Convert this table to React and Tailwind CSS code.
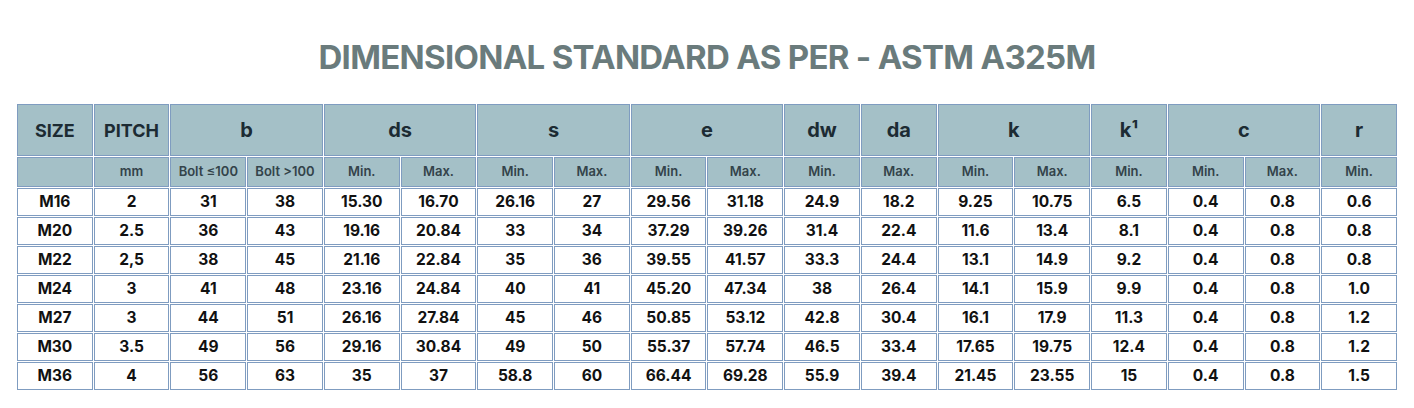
const ROWS = [
  ['M16', '2', '31', '38', '15.30', '16.70', '26.16', '27', '29.56', '31.18', '24.9', '18.2', '9.25', '10.75', '6.5', '0.4', '0.8', '0.6'],
  ['M20', '2.5', '36', '43', '19.16', '20.84', '33', '34', '37.29', '39.26', '31.4', '22.4', '11.6', '13.4', '8.1', '0.4', '0.8', '0.8'],
  ['M22', '2,5', '38', '45', '21.16', '22.84', '35', '36', '39.55', '41.57', '33.3', '24.4', '13.1', '14.9', '9.2', '0.4', '0.8', '0.8'],
  ['M24', '3', '41', '48', '23.16', '24.84', '40', '41', '45.20', '47.34', '38', '26.4', '14.1', '15.9', '9.9', '0.4', '0.8', '1.0'],
  ['M27', '3', '44', '51', '26.16', '27.84', '45', '46', '50.85', '53.12', '42.8', '30.4', '16.1', '17.9', '11.3', '0.4', '0.8', '1.2'],
  ['M30', '3.5', '49', '56', '29.16', '30.84', '49', '50', '55.37', '57.74', '46.5', '33.4', '17.65', '19.75', '12.4', '0.4', '0.8', '1.2'],
  ['M36', '4', '56', '63', '35', '37', '58.8', '60', '66.44', '69.28', '55.9', '39.4', '21.45', '23.55', '15', '0.4', '0.8', '1.5'],
]

// top header: label + colspan
const GROUPS = [
  ['SIZE', 1], ['PITCH', 1], ['b', 2], ['ds', 2], ['s', 2], ['e', 2],
  ['dw', 1], ['da', 1], ['k', 2], ['k\u00b9', 1], ['c', 2], ['r', 1],
]

const SUB = [
  '', 'mm', 'Bolt \u2264100', 'Bolt >100', 'Min.', 'Max.', 'Min.', 'Max.', 'Min.', 'Max.',
  'Min.', 'Max.', 'Min.', 'Max.', 'Min.', 'Min.', 'Max.', 'Min.',
]

const cell = 'border border-[#7f9cc0] text-center align-middle p-0'

export default function App() {
  return (
    <div className="w-[1414px] h-[408px] bg-white" style={{ fontFamily: 'Inter, "Noto Sans", sans-serif' }}>
      <div className="h-[103px] pt-[12px] flex items-center justify-center">
        <h1 className="text-[33px] font-bold tracking-[-0.7px] text-[#6a7b7c] uppercase">
          Dimensional Standard as per - ASTM A325M
        </h1>
      </div>

      <div className="px-[16px]">
        <table className="w-full table-fixed border-separate border-spacing-[1px]">
          <thead>
            <tr className="h-[52px] bg-[#a4c0c7]">
              {GROUPS.map(([label, span]) => (
                <th
                  key={label}
                  colSpan={span}
                  className={`${cell} ${label.length > 2 ? 'text-[18px]' : 'text-[20px]'} font-bold text-[#1c2b33]`}
                >
                  {label}
                </th>
              ))}
            </tr>
            <tr className="h-[30px] bg-[#a4c0c7]">
              {SUB.map((s, i) => (
                <th key={i} className={`${cell} text-[13px] font-semibold text-[#33434a] whitespace-nowrap`}>
                  {s}
                </th>
              ))}
            </tr>
          </thead>
          <tbody>
            {ROWS.map((row) => (
              <tr key={row[0]} className="h-[28px]">
                {row.map((v, i) => (
                  <td key={i} className={`${cell} text-[15.5px] font-bold text-[#111]`}>
                    {v}
                  </td>
                ))}
              </tr>
            ))}
          </tbody>
        </table>
      </div>
    </div>
  )
}
